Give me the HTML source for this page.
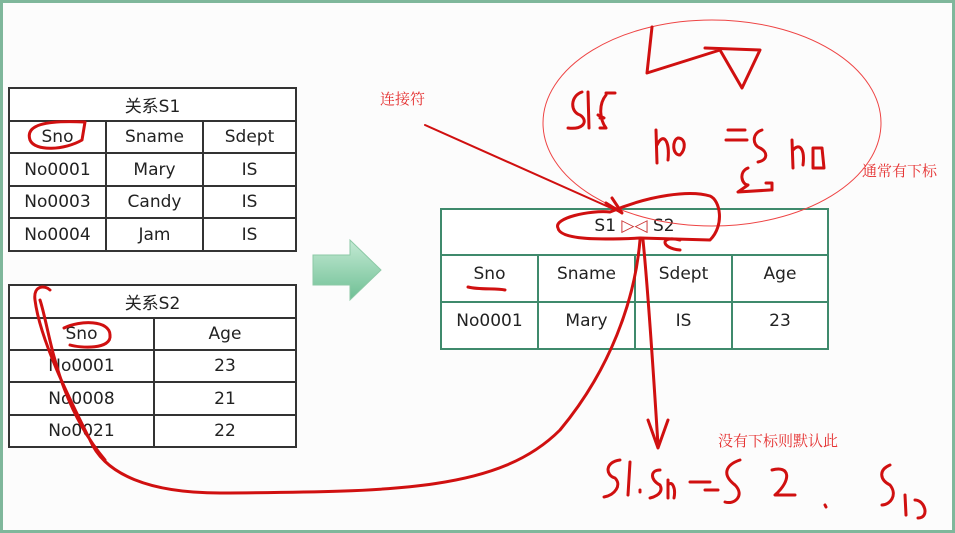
<!DOCTYPE html>
<html><head><meta charset="utf-8"><style>
body{margin:0;width:955px;height:533px;overflow:hidden;background:#fff}
#f{position:absolute;left:0;top:0;width:949px;height:527px;border:3px solid #7fb79b;background:#fcfcfc}
table{position:absolute;border-collapse:collapse;font-family:"DejaVu Sans","Liberation Sans","Noto Sans CJK SC",sans-serif;font-size:17px;color:#222;background:#fff}
td{text-align:center;padding:0}
.k td{border:2px solid #333}
.g td{border:2px solid #3f8a6c;vertical-align:top;padding-top:8px}
.r{position:absolute;color:#e53030;font-family:"Liberation Serif","Noto Serif CJK SC",serif;font-size:15px}
svg{position:absolute;left:0;top:0}
</style></head><body><div id="f"></div>
<table class="k" style="left:8px;top:87px;width:289px">
<tr style="height:33px"><td colspan="3">关系S1</td></tr>
<tr style="height:32px"><td style="width:95px">Sno</td><td style="width:95px">Sname</td><td>Sdept</td></tr>
<tr style="height:33px"><td>No0001</td><td>Mary</td><td>IS</td></tr>
<tr style="height:32px"><td>No0003</td><td>Candy</td><td>IS</td></tr>
<tr style="height:33px"><td>No0004</td><td>Jam</td><td>IS</td></tr></table>
<table class="k" style="left:8px;top:284px;width:289px">
<tr style="height:33px"><td colspan="2">关系S2</td></tr>
<tr style="height:32px"><td style="width:143px">Sno</td><td>Age</td></tr>
<tr style="height:32px"><td>No0001</td><td>23</td></tr>
<tr style="height:33px"><td>No0008</td><td>21</td></tr>
<tr style="height:32px"><td>No0021</td><td>22</td></tr></table>
<table class="g" style="left:440px;top:208px;width:389px">
<tr style="height:46px"><td colspan="4" style="padding-top:6px">S1 <span style="color:#c33">▷◁</span> S2</td></tr>
<tr style="height:47px"><td style="width:95px">Sno</td><td style="width:95px">Sname</td><td style="width:95px">Sdept</td><td>Age</td></tr>
<tr style="height:47px"><td>No0001</td><td>Mary</td><td>IS</td><td>23</td></tr></table>
<div class="r" style="left:380px;top:88px">连接符</div>
<div class="r" style="left:862px;top:160px">通常有下标</div>
<div class="r" style="left:718px;top:430px">没有下标则默认此</div>
<svg width="955" height="533">
<defs><linearGradient id="ga" x1="0" y1="0" x2="0" y2="1"><stop offset="0" stop-color="#c4ead4"/><stop offset="1" stop-color="#6ebf94"/></linearGradient></defs>
<path d="M313 255H350V240L381 270L350 300V285H313Z" fill="url(#ga)" stroke="#8cc9a6"/>
<ellipse cx="712" cy="123" rx="169" ry="103" fill="none" stroke="#e44" stroke-width="1"/>
<g fill="none" stroke="#d01010" stroke-width="3" stroke-linecap="round" stroke-linejoin="round">
<line x1="425" y1="125" x2="620" y2="212" stroke-width="2"/>
<path d="M606 203L622 213L612 198"/>
<path d="M652 27L647 73L720 50L742 88L760 50L705 48"/>
<path d="M582 92C570 96 570 112 580 115C588 120 585 130 568 128M588 92L589 128M598 115L604 118L600 118M606 93L615 93M606 95C598 105 600 120 606 128L600 128"/>
<path d="M656 130L657 163M657 145C663 132 670 140 668 160M678 138C672 140 672 155 680 155C686 150 686 138 678 138"/>
<path d="M728 130L745 130M726 140L747 140M762 130C752 133 752 145 760 148C768 152 768 160 758 162M792 140L793 168M793 150C800 142 805 150 803 165M813 148L813 168L824 168L822 148Z"/>
<path d="M748 168C738 172 742 185 748 185L738 192L770 190M766 183L772 183L772 190"/>
<path d="M610 212C590 210 553 218 558 228C560 240 600 240 640 238L710 240C725 225 720 200 710 196C690 190 650 195 610 212"/>
<path d="M680 240C660 235 660 248 680 250"/>
<path d="M468 287C480 290 495 288 505 290"/>
<path d="M643 240C648 290 652 350 658 445M648 420L658 448L668 420"/>
<path d="M640 240C635 300 610 370 560 430C500 490 400 492 220 493C150 493 105 475 90 440C70 400 40 340 35 300C33 285 45 285 50 290M40 300C50 330 55 400 105 460"/>
<path d="M30 140C25 125 45 120 85 122L82 140C65 150 35 152 30 140"/>
<path d="M64 328C80 320 110 320 110 335C112 350 80 348 70 345"/>
<path d="M620 460C605 462 605 475 615 478C622 485 615 495 604 497M630 462L628 495M640 490L640 492M660 470C650 470 650 480 660 485C665 495 650 498 650 498M668 480L668 498M668 485C672 480 676 488 674 498M690 482L710 482M705 490L718 490M740 460C725 465 722 475 735 485C745 495 735 505 725 502M772 470C790 465 792 480 775 495L795 495M825 505L826 507M890 465C878 470 880 480 890 485C898 495 890 505 882 505M905 495L906 515M915 500C925 500 930 518 918 518"/>
</g></svg>
</body></html>
